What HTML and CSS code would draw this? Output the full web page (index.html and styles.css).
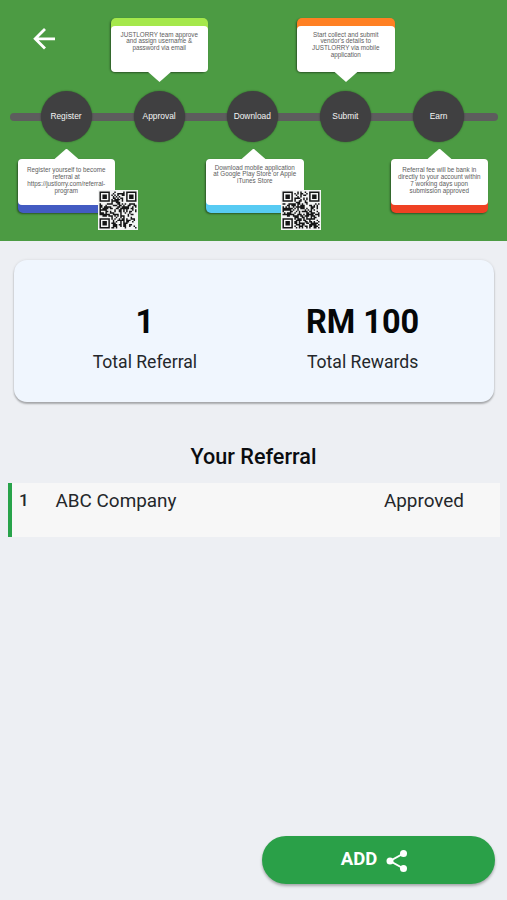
FILE: index.html
```html
<!DOCTYPE html>
<html lang="en">
<head>
<meta charset="utf-8">
<title>Referral</title>
<link rel="stylesheet" href="styles.css">
</head>
<body>
<header class="hero">
  <button class="back" aria-label="Back"><svg width="24" height="24" viewBox="0 0 24 24" fill="none" stroke="#fff" stroke-width="2.8"><path d="M13 2 3.2 11.8 13 21.6M3.2 11.8H23"/></svg></button>
  <div class="notes notes-top">
    <div class="note down lime"><p>JUSTLORRY team approve<br>and assign username &amp;<br>password via email</p></div>
    <div class="note down orange"><p>Start collect and submit<br>vendor's details to<br>JUSTLORRY via mobile<br>application</p></div>
  </div>
  <div class="steps">
    <span>Register</span><span>Approval</span><span>Download</span><span>Submit</span><span>Earn</span>
  </div>
  <div class="notes notes-bottom">
    <div class="note up blue"><p>Register yourself to become<br>referral at<br>https://justlorry.com/referral-<br>program</p><svg class="qr" viewBox="0 0 27 27" data-seed="17"></svg></div>
    <div class="note up sky"><p>Download mobile application<br>at Google Play Store or Apple<br>iTunes Store</p><svg class="qr" viewBox="0 0 27 27" data-seed="91"></svg></div>
    <div class="note up red"><p>Referral fee will be bank in<br>directly to your account within<br>7 working days upon<br>submission approved</p></div>
  </div>
</header>
<main>
  <section class="summary">
    <div class="stat"><strong>1</strong><span>Total Referral</span></div>
    <div class="stat"><strong>RM 100</strong><span>Total Rewards</span></div>
  </section>
  <h2>Your Referral</h2>
  <div class="row"><b>1</b><span class="name">ABC Company</span><span class="status">Approved</span></div>
</main>
<footer>
  <button class="add"><span>ADD</span><svg width="22" height="24" viewBox="0 0 22 24"><path d="M17.5 4.5 4 12l13.500 7.500" fill="none" stroke="#fff" stroke-width="2"/><g fill="#fff"><circle cx="17.500" cy="4.400" r="3.500"/><circle cx="4" cy="12" r="3.500"/><circle cx="17.500" cy="19.600" r="3.500"/></g></svg></button>
</footer>
<script src="qr.js"></script>
</body>
</html>
```
FILE: styles.css
```css
* { box-sizing: border-box; }
body { margin: 0; height: 900px; display: flex; flex-direction: column; background: #edeff3; font-family: Roboto, sans-serif; color: #24272b; overflow: hidden; }
button { border: 0; padding: 0; background: none; font: inherit; }
.hero { height: 241px; position: relative; background: #4c9b43; font-family: "Liberation Sans", Arial, sans-serif; padding-top: 18px; }
.back { position: absolute; left: 32px; top: 27px; height: 24px; }
.back svg { display: block; }
.notes { display: flex; }
.notes-top { padding-left: 110.5px; height: 73px; gap: 89px; }
.notes-bottom { padding-left: 17.5px; padding-top: 17px; gap: 91px; }
.note { position: relative; width: 97.5px; height: 53.5px; border-radius: 5px; box-shadow: -1px 1px 2px rgba(0,0,0,.45); flex: none; }
.note p { margin: 0; height: 46px; border-radius: 4px; background: #fff; font-size: 6.3px; line-height: 6.85px; text-align: center; white-space: nowrap; color: #5c5c5c; display: flow-root; }
.note::after { content: ""; position: absolute; left: 36.5px; width: 25px; height: 11px; background: #fff; }
.down { padding-top: 7.5px; }
.down p { padding-top: 6px; }
.down::after { bottom: -10.5px; clip-path: polygon(0 0, 100% 0, 50% 100%); }
.up p { padding-top: 8px; }
.up::after { top: -10.5px; clip-path: polygon(0 100%, 100% 100%, 50% 0); }
.lime { background: #a5e84b; }
.orange { background: #ff8023; }
.blue { background: #435bc2; }
.sky { background: #57cbf3; margin-right: -4px; }
.red { background: #ef4123; }
.sky p { padding-top: 5.5px; }
.sky::after { left: 35px; }
.qr { position: absolute; left: 80px; top: 31px; width: 40px; height: 40px; background: #f4f5f4; }
.sky .qr { left: 74.5px; }
.steps { height: 51px; padding: 0 43px 0 40.5px; display: flex; justify-content: space-between; position: relative; }
.steps::before { content: ""; position: absolute; left: 10px; top: 22px; width: 488px; height: 8px; border-radius: 4px; background: #5d5d5d; }
.steps span { position: relative; width: 51px; height: 51px; border-radius: 50%; background: #404041; color: #f4f4f4; font-size: 8.4px; line-height: 50px; text-align: center; box-shadow: 0 0 2px rgba(0,0,0,.4); }
.summary { margin: 19px 13.5px 0 14px; height: 142px; border-radius: 13px; background: #f0f6fe; box-shadow: 0 2px 2px rgba(0,0,0,.28), 0 0 3px rgba(0,0,0,.1); display: flex; padding: 42px 22px 0; }
.stat { flex: 1; display: flex; flex-direction: column; align-items: center; }
.stat strong { font-size: 32.5px; line-height: 40px; color: #050708; }
.stat span { font-size: 17.6px; line-height: 24px; margin-top: 8px; }
h2 { margin: 41px 0 0; text-align: center; font-size: 21.6px; line-height: 28px; font-weight: 500; color: #0b0d10; }
.row { margin: 12px 7px 0 8px; height: 54px; background: #f7f7f7; border-left: 4px solid #28a34a; display: flex; padding: 6px 36px 0 7px; font-size: 18.9px; line-height: 24px; }
.row b { width: 36.5px; font-size: 17px; line-height: 22px; font-weight: 500; }
.name { flex: 1; }
footer { margin-top: auto; padding: 0 12px 16px; display: flex; justify-content: flex-end; }
.add { width: 233px; height: 48px; border-radius: 24px; background: #2aa048; color: #fff; display: flex; align-items: center; justify-content: center; gap: 9px; padding-right: 8px; box-shadow: 0 2px 3px rgba(0,0,0,.3); font-size: 18.5px; font-weight: 700; }
.add span { margin-top: -3px; }
.add svg { margin-top: 1px; }
```
FILE: qr.js
```js
// Fills each .qr element with finder squares and a seeded module pattern.
document.querySelectorAll('.qr').forEach(function (svg) {
  var seed = +svg.dataset.seed, d = '';
  function random() { seed = (seed * 16807) % 2147483647; return seed / 2147483647; }
  random(); random();
  function finder(x, y) {
    x = x > 16 ? 24 - x : x;
    var v = y > 16 ? 24 - y : y;
    if (x > 7 || v > 7) return null;
    var r = Math.max(Math.abs(x - 3), Math.abs(v - 3));
    return r === 3 || r < 2;
  }
  for (var y = 0; y < 25; y++) for (var x = 0; x < 25; x++) {
    var f = x > 16 && y > 16 ? null : finder(x, y);
    if (f === null ? random() < 0.52 : f) d += 'M' + (x + 1) + ' ' + (y + 1) + 'h1v1h-1z';
  }
  svg.innerHTML = '<path fill="#151616" d="' + d + '"/>';
});
```
